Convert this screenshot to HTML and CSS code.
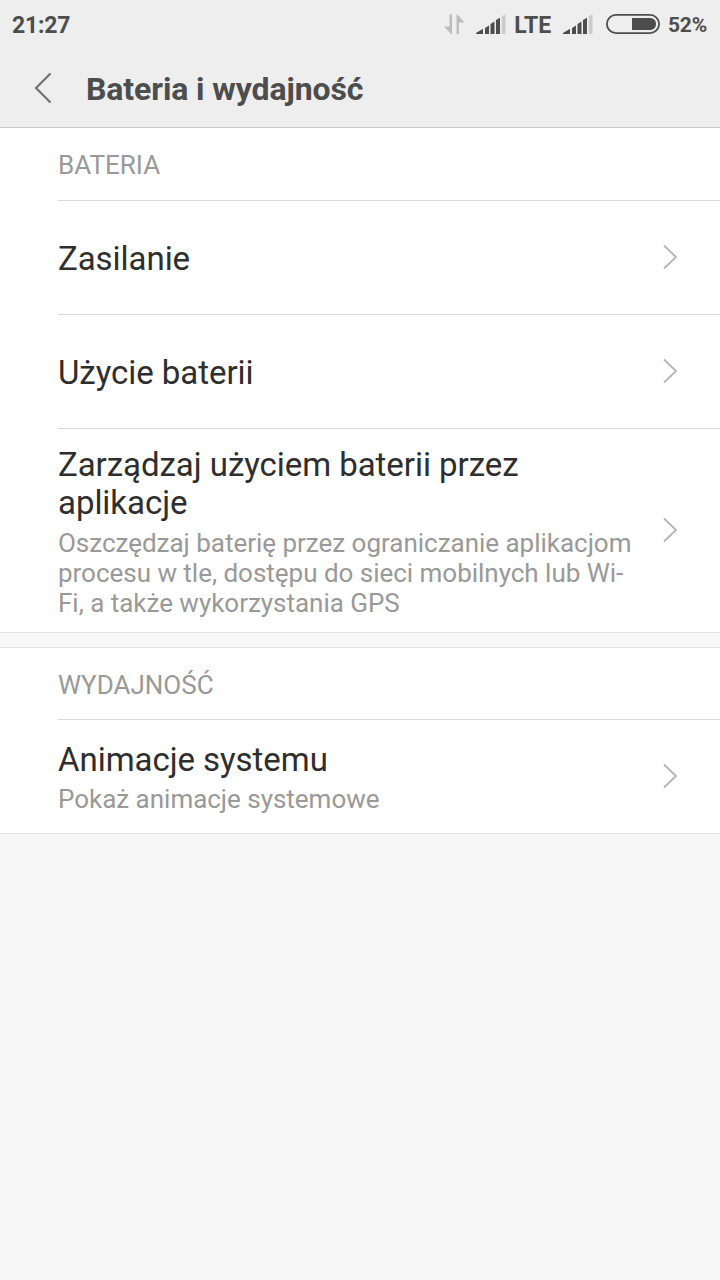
FILE: index.html
```html
<!DOCTYPE html>
<html lang="pl">
<head>
  <meta charset="UTF-8">
  <title>Bateria i wydajność</title>
  <link rel="stylesheet" href="styles.css">
</head>
<body>
  <header>
    <div class="status-bar">
      <span class="time">21:27</span>
      <svg class="data" width="20" height="20" viewBox="0 0 20 20">
        <path d="M5.500 0.500H8V20H7L0 12.500H5.500Z" fill="#bdbdbd"/>
        <path d="M12.500 20H15V8.500H20.500L13.500 0.500H12.500Z" fill="#bdbdbd"/>
      </svg>
      <svg class="signal" width="30" height="20" viewBox="0 0 30 20">
        <path d="M0 20V19L7 14.700V20ZM9 20V14L13 11.500V20ZM14.500 20V10L18.500 7.500V20ZM20 20V6L24 3.700V20Z" fill="#4d4d4d"/>
        <path d="M25.700 20V2.500L29.500 0V20Z" fill="#cccccc"/>
      </svg>
      <span class="network">LTE</span>
      <svg class="signal" width="30" height="20" viewBox="0 0 30 20">
        <path d="M0 20V19L7 14.700V20ZM9 20V14L13 11.500V20ZM14.500 20V10L18.500 7.500V20ZM20 20V6L24 3.700V20Z" fill="#4d4d4d"/>
        <path d="M25.700 20V2.500L29.500 0V20Z" fill="#cccccc"/>
      </svg>
      <svg class="battery" width="54" height="20" viewBox="0 0 54 20">
        <rect x="0.900" y="0.900" width="52.200" height="18.200" rx="9.100" fill="none" stroke="#4d4d4d" stroke-width="1.800"/>
        <path d="M26 4H45Q50 5 50 10T45 16H26Z" fill="#4d4d4d"/>
      </svg>
      <span class="percent">52%</span>
    </div>
    <div class="title-bar">
      <svg class="back" width="18" height="32" viewBox="0 0 18 32"><path d="M16.500 1.500L2 16L16.500 30.500"/></svg>
      <h1>Bateria i wydajność</h1>
    </div>
  </header>

  <section>
    <h2>BATERIA</h2>
    <div class="item">
      <div class="text"><p class="name">Zasilanie</p></div>
      <svg class="arrow" width="16" height="26" viewBox="0 0 16 26"><path d="M2 1.500L14 13L2 24.500"/></svg>
    </div>
    <div class="item">
      <div class="text"><p class="name">Użycie baterii</p></div>
      <svg class="arrow" width="16" height="26" viewBox="0 0 16 26"><path d="M2 1.500L14 13L2 24.500"/></svg>
    </div>
    <div class="item item-long">
      <div class="text">
        <p class="name">Zarządzaj użyciem baterii przez<br>aplikacje</p>
        <p class="desc">Oszczędzaj baterię przez ograniczanie aplikacjom<br>procesu w tle, dostępu do sieci mobilnych lub Wi-<br>Fi, a także wykorzystania GPS</p>
      </div>
      <svg class="arrow" width="16" height="26" viewBox="0 0 16 26"><path d="M2 1.500L14 13L2 24.500"/></svg>
    </div>
  </section>

  <section class="performance">
    <h2>WYDAJNOŚĆ</h2>
    <div class="item">
      <div class="text">
        <p class="name">Animacje systemu</p>
        <p class="desc">Pokaż animacje systemowe</p>
      </div>
      <svg class="arrow" width="16" height="26" viewBox="0 0 16 26"><path d="M2 1.500L14 13L2 24.500"/></svg>
    </div>
  </section>
</body>
</html>
```
FILE: styles.css
```css
* {
  margin: 0;
  padding: 0;
  box-sizing: border-box;
}

body {
  min-height: 100vh;
  background: #f7f7f7;
  font-family: Roboto, sans-serif;
  color: #2e2e2e;
}

header {
  height: 128px;
  background: #eeeeee;
  border-bottom: 1px solid #c8c8c8;
  color: #4d4d4d;
}

.status-bar {
  height: 50px;
  padding: 0 12px;
  display: flex;
  align-items: center;
  font-size: 23px;
  font-weight: 700;
  white-space: nowrap;
}

.status-bar svg {
  margin-bottom: 2px;
}

.time {
  letter-spacing: -0.2px;
}

.data {
  margin-left: auto;
}

.signal {
  margin-left: 12px;
}

.network {
  margin-left: 8px;
  letter-spacing: -0.1px;
}

.battery {
  margin: 0 8px 0 13px;
}

.percent {
  margin-right: 1px;
  font-size: 21px;
  letter-spacing: -0.2px;
}

.title-bar {
  height: 77px;
  padding-left: 34px;
  display: flex;
  align-items: center;
}

.back {
  margin-bottom: 1px;
  fill: none;
  stroke: #747474;
  stroke-width: 2.3;
}

h1 {
  margin-left: 34px;
  font-size: 32px;
  font-weight: 700;
  letter-spacing: -0.1px;
}

section {
  padding-left: 58px;
  background: #fff;
  border-bottom: 1px solid #e2e2e2;
}

h2 {
  height: 72px;
  line-height: 74px;
  font-size: 26px;
  font-weight: 400;
  color: #999;
}

.item {
  height: 114px;
  padding-right: 42px;
  display: flex;
  align-items: center;
  justify-content: space-between;
  border-top: 1px solid #d9d9d9;
}

.item-long {
  height: 204px;
}

.text {
  padding-top: 2px;
}

.name {
  font-size: 33px;
  line-height: 38px;
  letter-spacing: -0.05px;
}

.desc {
  margin-top: 6px;
  font-size: 26px;
  line-height: 30px;
  letter-spacing: -0.02px;
  color: #999;
}

.arrow {
  margin-bottom: 2px;
  fill: none;
  stroke: #b5b5b5;
  stroke-width: 1.8;
}

.performance {
  margin-top: 14px;
  border-top: 1px solid #e2e2e2;
}

.performance h2 {
  height: 71px;
}

.performance .desc {
  margin-top: 5px;
}
```
